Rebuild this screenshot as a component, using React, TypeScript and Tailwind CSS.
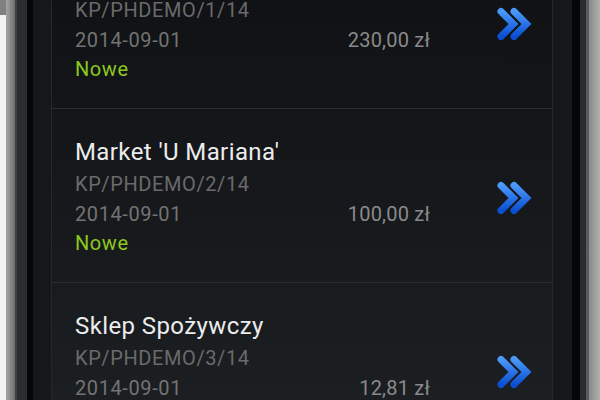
const orders = [
  { title: "Sklep Mięsny", no: "KP/PHDEMO/1/14", date: "2014-09-01", amount: "230,00 zł", status: "Nowe" },
  { title: "Market 'U Mariana'", no: "KP/PHDEMO/2/14", date: "2014-09-01", amount: "100,00 zł", status: "Nowe" },
  { title: "Sklep Spożywczy", no: "KP/PHDEMO/3/14", date: "2014-09-01", amount: "12,81 zł", status: "Nowe" },
];

function DoubleChevron() {
  return (
    <svg width="38" height="34" viewBox="0 0 38 34" fill="none">
      <defs>
        <linearGradient id="chev" x1="0" y1="0" x2="0" y2="1">
          <stop offset="0" stopColor="#4a98fa" />
          <stop offset="1" stopColor="#0a4fd2" />
        </linearGradient>
      </defs>
      <path d="M5 4.5 L17.5 17 L5 29.5" stroke="url(#chev)" strokeWidth="7" strokeLinejoin="miter" strokeLinecap="round" />
      <path d="M18 4.5 L30.5 17 L18 29.5" stroke="url(#chev)" strokeWidth="7" strokeLinejoin="miter" strokeLinecap="round" />
    </svg>
  );
}

function OrderRow({ o }: { o: (typeof orders)[number] }) {
  return (
    <div className="flex items-center border-b border-[#2a2d30] pl-[23px] pt-[25px] pb-[23.5px]">
      <div className="w-[355px] tracking-[0.6px]">
        <div className="text-[24px] leading-[36px] text-[#ececec] tracking-[0.4px]">{o.title}</div>
        <div className="text-[20px] leading-[29.5px] text-[#6a6a6a]">{o.no}</div>
        <div className="flex justify-between text-[20px] leading-[29.5px]">
          <span className="text-[#737373]">{o.date}</span>
          <span className="text-[#8a8a8a] tracking-[0.2px]">{o.amount}</span>
        </div>
        <div className="text-[20px] leading-[29.5px] text-[#8cc81f]">{o.status}</div>
      </div>
      <div className="ml-[66px] mt-[4px]">
        <DoubleChevron />
      </div>
    </div>
  );
}

export default function App() {
  return (
    <main className="flex h-[400px] w-[600px] overflow-hidden bg-white font-['Roboto',sans-serif]">
      {/* left bezel */}
      <div className="flex w-[6px] flex-col bg-[#f2f2f2]">
        <div className="h-[15px] bg-[#808080]" />
      </div>
      <div className="w-[9px] bg-gradient-to-r from-[#a6a6a6] to-[#6c6c6c]" />
      <div className="w-[2px] bg-[#3d3f41]" />
      <div className="w-[10px] bg-[#2a2d30]" />
      <div className="w-[6px] bg-[#060606]" />
      <div className="w-[18px] bg-[#15171a]" />

      {/* screen */}
      <div className="w-[502px] overflow-hidden border-x border-[#25282b] bg-gradient-to-b from-[#101215] to-[#1c1f22]">
        <div className="-mt-[65px]">
          {orders.map((o) => (
            <OrderRow key={o.no} o={o} />
          ))}
        </div>
      </div>

      {/* right bezel */}
      <div className="w-[19px] bg-[#15171a]" />
      <div className="w-[8px] bg-[#060606]" />
      <div className="w-[6px] bg-[#2a2d30]" />
      <div className="w-[3px] bg-[#5a5a5a]" />
      <div className="w-[11px] bg-gradient-to-r from-[#8a8a8a] to-[#b0b0b0]" />
    </main>
  );
}
